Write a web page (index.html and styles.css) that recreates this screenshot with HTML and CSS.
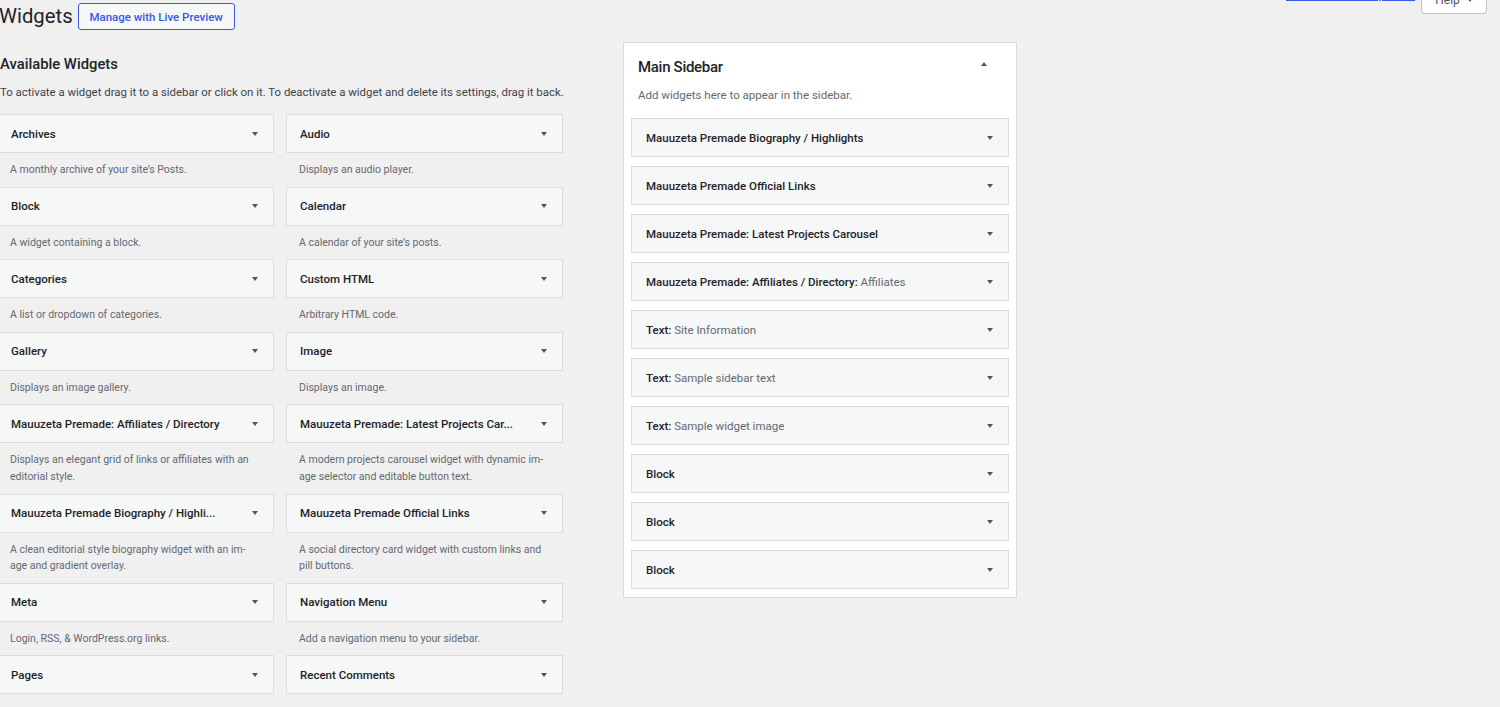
FILE: index.html
```html
<!DOCTYPE html>
<html lang="en">
<head>
<meta charset="utf-8">
<title>Widgets</title>
<link rel="stylesheet" href="styles.css">
</head>
<body>
<div class="screen-meta">
  <a class="a11y-link" href="#">Enable accessibility mode</a>
  <button class="help-btn">Help <span class="help-caret"></span></button>
</div>
<div class="wrap">
  <div class="page-head">
    <h1 class="page-title">Widgets</h1>
    <a class="live-btn" href="#">Manage with Live Preview</a>
  </div>
  <div class="columns">
    <div class="available">
      <h2 class="section-title">Available Widgets</h2>
      <p class="section-desc">To activate a widget drag it to a sidebar or click on it. To deactivate a widget and delete its settings, drag it back.</p>
      <div class="widget-grid">
        <div class="widget"><div class="widget-top"><span class="wt">Archives</span><span class="arrow"></span></div><div class="widget-desc">A monthly archive of your site’s Posts.</div></div>
        <div class="widget"><div class="widget-top"><span class="wt">Audio</span><span class="arrow"></span></div><div class="widget-desc">Displays an audio player.</div></div>
        <div class="widget"><div class="widget-top"><span class="wt">Block</span><span class="arrow"></span></div><div class="widget-desc">A widget containing a block.</div></div>
        <div class="widget"><div class="widget-top"><span class="wt">Calendar</span><span class="arrow"></span></div><div class="widget-desc">A calendar of your site’s posts.</div></div>
        <div class="widget"><div class="widget-top"><span class="wt">Categories</span><span class="arrow"></span></div><div class="widget-desc">A list or dropdown of categories.</div></div>
        <div class="widget"><div class="widget-top"><span class="wt">Custom HTML</span><span class="arrow"></span></div><div class="widget-desc">Arbitrary HTML code.</div></div>
        <div class="widget"><div class="widget-top"><span class="wt">Gallery</span><span class="arrow"></span></div><div class="widget-desc">Displays an image gallery.</div></div>
        <div class="widget"><div class="widget-top"><span class="wt">Image</span><span class="arrow"></span></div><div class="widget-desc">Displays an image.</div></div>
        <div class="widget"><div class="widget-top"><span class="wt">Mauuzeta Premade: Affiliates / Directory</span><span class="arrow"></span></div><div class="widget-desc">Displays an elegant grid of links or affiliates with an<br>editorial style.</div></div>
        <div class="widget"><div class="widget-top"><span class="wt">Mauuzeta Premade: Latest Projects Car...</span><span class="arrow"></span></div><div class="widget-desc">A modern projects carousel widget with dynamic im-<br>age selector and editable button text.</div></div>
        <div class="widget"><div class="widget-top"><span class="wt">Mauuzeta Premade Biography / Highli...</span><span class="arrow"></span></div><div class="widget-desc">A clean editorial style biography widget with an im-<br>age and gradient overlay.</div></div>
        <div class="widget"><div class="widget-top"><span class="wt">Mauuzeta Premade Official Links</span><span class="arrow"></span></div><div class="widget-desc">A social directory card widget with custom links and<br>pill buttons.</div></div>
        <div class="widget"><div class="widget-top"><span class="wt">Meta</span><span class="arrow"></span></div><div class="widget-desc">Login, RSS, &amp; WordPress.org links.</div></div>
        <div class="widget"><div class="widget-top"><span class="wt">Navigation Menu</span><span class="arrow"></span></div><div class="widget-desc">Add a navigation menu to your sidebar.</div></div>
        <div class="widget"><div class="widget-top"><span class="wt">Pages</span><span class="arrow"></span></div></div>
        <div class="widget"><div class="widget-top"><span class="wt">Recent Comments</span><span class="arrow"></span></div></div>
      </div>
    </div>
    <div class="sidebars">
      <div class="sidebar-box">
        <div class="sidebar-head">
          <h2 class="sidebar-title">Main Sidebar</h2>
          <span class="arrow-up"></span>
        </div>
        <p class="sidebar-desc">Add widgets here to appear in the sidebar.</p>
        <div class="sidebar-list">
          <div class="sb-item"><span class="wt">Mauuzeta Premade Biography / Highlights</span><span class="arrow"></span></div>
          <div class="sb-item"><span class="wt">Mauuzeta Premade Official Links</span><span class="arrow"></span></div>
          <div class="sb-item"><span class="wt">Mauuzeta Premade: Latest Projects Carousel</span><span class="arrow"></span></div>
          <div class="sb-item"><span class="wt">Mauuzeta Premade: Affiliates / Directory:<span class="in-title"> Affiliates</span></span><span class="arrow"></span></div>
          <div class="sb-item"><span class="wt">Text:<span class="in-title"> Site Information</span></span><span class="arrow"></span></div>
          <div class="sb-item"><span class="wt">Text:<span class="in-title"> Sample sidebar text</span></span><span class="arrow"></span></div>
          <div class="sb-item"><span class="wt">Text:<span class="in-title"> Sample widget image</span></span><span class="arrow"></span></div>
          <div class="sb-item"><span class="wt">Block</span><span class="arrow"></span></div>
          <div class="sb-item"><span class="wt">Block</span><span class="arrow"></span></div>
          <div class="sb-item"><span class="wt">Block</span><span class="arrow"></span></div>
        </div>
      </div>
    </div>
  </div>
</div>
</body>
</html>
```
FILE: styles.css
```css
* { box-sizing: border-box; }
html, body { margin: 0; padding: 0; }
body {
  background: #f0f0f1;
  color: #1d2327;
  font-family: Roboto, "Noto Sans", sans-serif;
  font-size: 11.5px;
  overflow: hidden;
  height: 707px;
  position: relative;
}

.screen-meta {
  position: absolute;
  top: -14px;
  right: 13px;
  display: flex;
  align-items: flex-start;
  gap: 6px;
}
.a11y-link {
  color: #3858e9;
  text-decoration: underline;
  font-size: 11.2px;
  line-height: 17px;
  margin-top: 1px;
  white-space: nowrap;
}
.help-btn {
  width: 66px;
  height: 28px;
  background: #fff;
  border: 1px solid #c3c4c7;
  border-top: none;
  border-radius: 0 0 4px 4px;
  font-family: inherit;
  font-size: 12px;
  color: #50575e;
  padding: 0;
  display: flex;
  align-items: center;
  justify-content: center;
  gap: 7px;
}
.help-caret {
  width: 0; height: 0;
  border-left: 3.5px solid transparent;
  border-right: 3.5px solid transparent;
  border-top: 4px solid #50575e;
}

.wrap { padding: 3px 0 0 0; }
.page-head {
  display: flex;
  align-items: center;
  gap: 5px;
  height: 27px;
}
.page-title {
  margin: 0;
  font-size: 20.3px;
  font-weight: 400;
  line-height: 27px;
  margin-left: -1px;
}
.live-btn {
  display: flex;
  align-items: center;
  justify-content: center;
  width: 157px;
  height: 27px;
  border: 1px solid #3858e9;
  border-radius: 3px;
  background: #f6f7f7;
  color: #3858e9;
  font-weight: 500;
  font-size: 11.5px;
  text-decoration: none;
  white-space: nowrap;
}

.columns {
  display: flex;
  align-items: flex-start;
  gap: 60px;
}
.available {
  width: 566px;
  margin-left: -3px;
}
.section-title {
  margin: 24px 0 0 3px;
  font-size: 14.8px;
  font-weight: 500;
  line-height: 20px;
}
.section-desc {
  margin: 9.5px 0 0 3px;
  font-size: 11.4px;
  line-height: 17px;
  color: #3c434a;
  white-space: nowrap;
}
.widget-grid {
  margin-top: 13.5px;
  display: grid;
  grid-template-columns: 277px 277px;
  column-gap: 12px;
}
.widget-top {
  height: 39px;
  border: 1px solid #dcdcde;
  background: #f6f7f7;
  display: flex;
  align-items: center;
  justify-content: space-between;
  padding: 0 15px 0 13px;
}
.wt {
  font-size: 11.5px;
  font-weight: 500;
  white-space: nowrap;
  overflow: hidden;
  text-overflow: ellipsis;
}
.arrow {
  flex: none;
  width: 0; height: 0;
  border-left: 3.5px solid transparent;
  border-right: 3.5px solid transparent;
  border-top: 4.5px solid #50575e;
  margin-left: 10px;
}
.widget-desc {
  padding: 9px 13px 8px 13px;
  font-size: 10.5px;
  line-height: 16.6px;
  color: #646970;
  white-space: nowrap;
}

.sidebars {
  width: 394px;
  margin-top: 12px;
}
.sidebar-box {
  background: #fff;
  border: 1px solid #dcdcde;
  padding: 14px 7px 8px 7px;
}
.sidebar-head {
  display: flex;
  align-items: center;
  justify-content: space-between;
  padding: 0 22px 0 7px;
}
.sidebar-title {
  margin: 0;
  font-size: 15px;
  font-weight: 500;
  line-height: 20px;
  letter-spacing: -0.3px;
}
.arrow-up {
  width: 0; height: 0;
  border-left: 3.5px solid transparent;
  border-right: 3.5px solid transparent;
  border-bottom: 4.5px solid #50575e;
  margin-top: -6px;
}
.sidebar-desc {
  margin: 9.5px 0 0 7px;
  font-size: 11.5px;
  line-height: 17px;
  color: #646970;
}
.sidebar-list {
  margin-top: 14.5px;
  display: flex;
  flex-direction: column;
  gap: 9px;
}
.sb-item {
  height: 39px;
  border: 1px solid #dcdcde;
  background: #f6f7f7;
  display: flex;
  align-items: center;
  justify-content: space-between;
  padding: 0 15px 0 14px;
}
.in-title {
  font-weight: 400;
  color: #646970;
}
```
